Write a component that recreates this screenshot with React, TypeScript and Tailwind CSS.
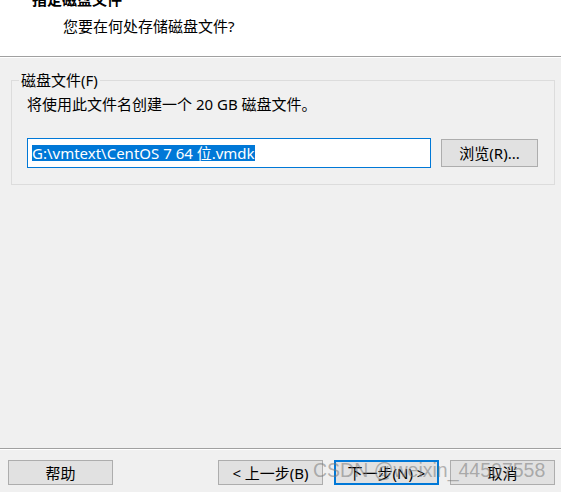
import React from "react";

const font = { fontFamily: '"Noto Sans", "Noto Sans CJK SC", sans-serif' };

function Btn({ children, primary = false }: { children: React.ReactNode; primary?: boolean }) {
  return (
    <button
      className={
        primary
          ? "w-[105px] h-[25px] bg-[#e1e1e1] border-2 border-[#0078d7] text-[15px] leading-[20px] text-black flex items-center justify-center"
          : "w-[105px] h-[25px] bg-[#e1e1e1] border border-[#adadad] text-[15px] leading-[20px] text-black flex items-center justify-center"
      }
    >
      {children}
    </button>
  );
}

export default function App() {
  return (
    <div className="relative w-[561px] h-[492px] bg-[#f0f0f0] overflow-hidden flex flex-col" style={font}>
      {/* wizard header */}
      <div className="h-[56px] bg-white flex flex-col shrink-0">
        <div className="-mt-[11px] pl-[32px] text-[15px] leading-[20px] font-bold text-black">指定磁盘文件</div>
        <div className="mt-[7px] pl-[63px] text-[15px] leading-[20px] text-black">您要在何处存储磁盘文件?</div>
      </div>
      <div className="h-px bg-[#a0a0a0] shrink-0" />
      <div className="h-px bg-white shrink-0" />

      {/* disk file group */}
      <fieldset className="mt-[12px] ml-[11px] mr-[6px] border border-[#dcdcdc]">
        <legend className="ml-[7px] px-[2px] text-[15px] leading-[20px] text-black">磁盘文件(F)</legend>
        <div className="px-[15px] pb-[16px]">
          <div className="pt-[4px] text-[15px] leading-[20px] text-black">将使用此文件名创建一个 20 GB 磁盘文件。</div>
          <div className="mt-[24px] flex items-start gap-[10px]">
            <div className="w-[404px] h-[30px] bg-white border border-[#0078d7] pl-[4px] flex items-center">
              <span className="bg-[#0078d7] text-white text-[15px] leading-[16px] whitespace-pre">G:\vmtext\CentOS 7 64 位.vmdk</span>
            </div>
            <button className="mt-px w-[97px] h-[28px] bg-[#e1e1e1] border border-[#adadad] text-[15px] leading-[20px] text-black flex items-center justify-center">
              浏览(R)...
            </button>
          </div>
        </div>
      </fieldset>

      <div className="flex-1" />

      {/* footer buttons */}
      <div className="h-px bg-[#a0a0a0] shrink-0" />
      <div className="h-px bg-white shrink-0" />
      <div className="mt-[10px] mb-[7px] flex items-center pl-[8px] pr-[6px]">
        <Btn>帮助</Btn>
        <div className="flex-1" />
        <div className="flex gap-[11px]">
          <Btn>&lt; 上一步(B)</Btn>
          <Btn primary>下一步(N) &gt;</Btn>
          <Btn>取消</Btn>
        </div>
      </div>

      {/* site watermark */}
      <div
        className="absolute left-[313px] top-[459px] text-[19.5px] leading-[22px] text-[rgba(120,120,120,0.55)] whitespace-nowrap pointer-events-none"
        style={{ fontFamily: '"Liberation Sans", Arial, sans-serif' }}
      >
        CSDN @weixin_44507558
      </div>
    </div>
  );
}
